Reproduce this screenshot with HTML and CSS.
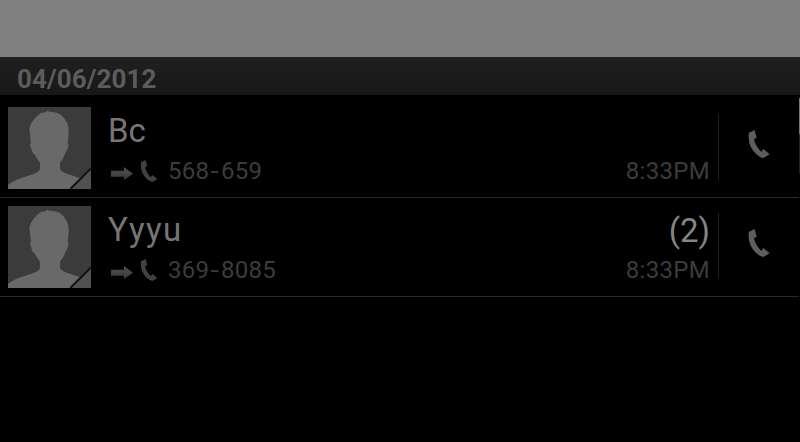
FILE: index.html
```html
<!DOCTYPE html>
<html lang="en">
<head>
<meta charset="utf-8">
<title>Call log</title>
<link rel="stylesheet" href="styles.css">
</head>
<body>
<svg class="defs" aria-hidden="true">
  <defs>
    <linearGradient id="arrow-fill" x1="0" y1="0" x2="0" y2="1"><stop offset="0" stop-color="#505050"/><stop offset="1" stop-color="#393939"/></linearGradient>
    <symbol id="handset" viewBox="0 0 66 84"><path d="M2 9 20 0 26 23 18 28Q22 48 40 66L46 57 65 73 46 84Q38 84 25 73Q3 52 2 24Z"/></symbol>
    <symbol id="arrow" viewBox="0 0 66 39"><path d="M0 11H39V0L66 20 39 39V29H0Z" fill="url(#arrow-fill)"/></symbol>
    <symbol id="person" viewBox="0 0 249 246">
      <path fill="#3b3b3b" d="M0 0H249V246H0Z"/>
      <path fill="#696969" d="M0 246V234Q14 222 40 213L74 202Q96 195 96 184V167L84 150 80 142Q74 141 69 122L65 111 69 109 64 64Q72 37 97 19L113 15 119 11 124 14Q143 13 157 22Q185 45 182 79L179 109 182 112Q180 129 172 139Q166 156 156 167V186Q160 196 182 202L214 213 249 226V246Z"/>
      <path fill="#515151" d="M249 185V246H187Z"/>
      <path d="M187 246 249 184" fill="none" stroke="#111" stroke-width="6"/>
    </symbol>
  </defs>
</svg>
<div class="topbar"></div>
<h1 class="date">04/06/2012</h1>
<main class="list">
  <div class="row">
    <svg class="avatar"><use href="#person"/></svg>
    <div class="info">
      <div class="line name-line"><span class="name">Bc</span></div>
      <div class="line detail"><svg class="arrow"><use href="#arrow"/></svg><svg class="mini"><use href="#handset"/></svg><span class="number">568<span class="dash">-</span>659</span><span class="time">8:33PM</span></div>
    </div>
    <div class="call"><svg><use href="#handset"/></svg></div>
  </div>
  <div class="row">
    <svg class="avatar"><use href="#person"/></svg>
    <div class="info">
      <div class="line name-line"><span class="name wide">Yyyu</span><span class="count">(2)</span></div>
      <div class="line detail"><svg class="arrow"><use href="#arrow"/></svg><svg class="mini"><use href="#handset"/></svg><span class="number">369<span class="dash">-</span>8085</span><span class="time">8:33PM</span></div>
    </div>
    <div class="call"><svg><use href="#handset"/></svg></div>
  </div>
  <div class="scrollbar"></div>
</main>
</body>
</html>
```
FILE: styles.css
```css
* { box-sizing: border-box; }
body { margin: 0; height: 442px; overflow: hidden; background: #000; font-family: Roboto, sans-serif; font-kerning: none; }
svg { display: block; flex: none; }
.defs { position: absolute; width: 0; height: 0; }
.topbar { height: 57px; background: #808080; }
.date { margin: 0; height: 38px; padding: 3px 17px 0; background: linear-gradient(#202020, #171717); color: #5c5c5c; font-size: 26px; font-weight: 700; line-height: 38px; letter-spacing: .1px; }
.list { position: relative; padding-top: 4px; }
.row { display: flex; width: 799px; height: 99px; padding: 8px 0 0 8px; border-bottom: 1px solid #292929; }
.avatar { width: 83px; height: 82px; }
.info { width: 618px; margin-left: 17px; }
.line { display: flex; align-items: center; }
.name-line { height: 48px; padding-bottom: 1px; justify-content: space-between; color: #757575; font-size: 33px; }
.wide { letter-spacing: 1.3px; }
.count { padding-top: 2px; color: #858585; }
.detail { height: 32px; color: #3c3c3c; font-size: 24px; letter-spacing: .3px; }
.arrow { width: 22px; height: 13px; margin: 4px 7px 0 3px; }
.mini { width: 18px; height: 22px; margin-top: -1px; fill: #414141; }
.number { margin-left: 10px; }
.dash { display: inline-block; width: 11.5px; text-align: center; transform: scaleX(1.25); }
.time { margin-left: auto; }
.name-line, .detail { padding-right: 16px; }
.call { width: 72px; height: 66px; margin-top: 7px; margin-left: -8px; border-left: 1px solid #202020; }
.call svg { width: 22px; height: 28px; margin: 16px 0 0 29px; fill: #5d5d5d; }
.scrollbar { position: absolute; right: 0; top: 3px; width: 1px; height: 76px; background: linear-gradient(#777 36px, #222 36px); }
```
